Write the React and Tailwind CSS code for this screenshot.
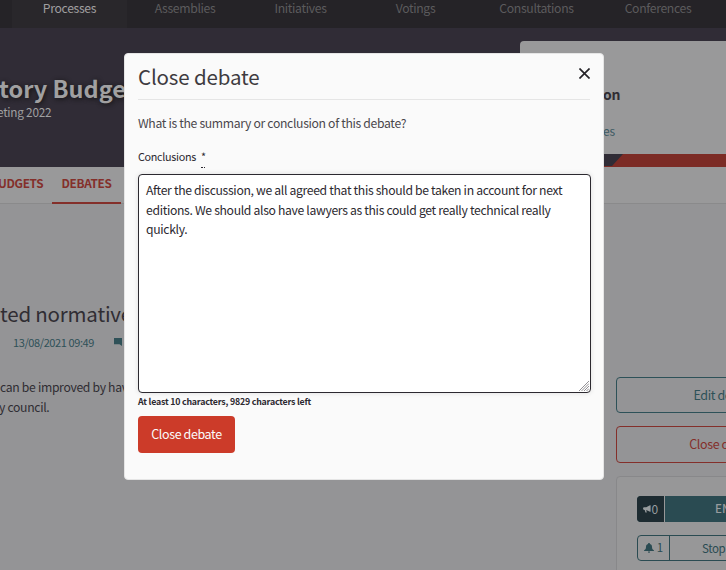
const NAV = [
  { label: "Processes", cell: "w-[115px] bg-[#29272b] text-[#a09fa0]" },
  { label: "Assemblies", cell: "w-[116px] text-[#5c5b5d]" },
  { label: "Initiatives", cell: "w-[115px] text-[#5c5b5d]" },
  { label: "Votings", cell: "w-[115px] text-[#5c5b5d]" },
  { label: "Consultations", cell: "w-[127px] text-[#5c5b5d]" },
  { label: "Conferences", cell: "w-[116px] text-[#5c5b5d]" },
];

function Nav() {
  return (
    <nav className="flex h-7 shrink-0 bg-[#252327] pl-3">
      {NAV.map((item) => (
        <div key={item.label} className={`flex h-7 shrink-0 justify-center text-[12.2px] leading-[16px] tracking-[-0.33px] ${item.cell}`}>
          {item.label}
        </div>
      ))}
    </nav>
  );
}

function Hero() {
  return (
    <header className="flex h-[139px] shrink-0 justify-between bg-[#302c36]">
      <div className="w-[300px] overflow-hidden pt-[44px] whitespace-nowrap text-[#a0a0a1]">
        <h1 className="-ml-px text-[23.5px] leading-[32px] font-bold [text-shadow:1px_1px_5px_#111]">tory Budgeting</h1>
        <p className="-ml-[3px] mt-px text-[11.8px] leading-[14px] tracking-[-0.25px]">eting 2022</p>
      </div>
      <div className="flex w-[206px] flex-col pt-[13px]">
        <div className="flex h-[113px] flex-col rounded-tl bg-[#99999a] pl-[83px]">
          <p className="mt-[42px] text-[14px] leading-[22px] font-bold tracking-[-0.2px] text-[#302d33]">on</p>
          <p className="mt-[16px] text-[12px] leading-[20px] tracking-[-0.25px] text-[#3c5a62]">es</p>
        </div>
        <div className="h-[13px] bg-[#7c2b25]">
          <div className="h-3 w-[103px] bg-[#302c36] [clip-path:polygon(0_0,100%_0,92px_100%,0_100%)]" />
        </div>
      </div>
    </header>
  );
}

function Tabs() {
  return (
    <div className="flex h-[37px] shrink-0 border-b border-[#8a8a8b] bg-[#99999a] text-[11.8px] leading-[32px] font-bold tracking-[-0.35px] text-[#842f2a]">
      <span className="-ml-[2px] w-[54px]">UDGETS</span>
      <span className="h-[38px] w-[69px] border-b-[3px] border-[#842f2a] text-center">DEBATES</span>
    </div>
  );
}

function Megaphone() {
  return (
    <svg viewBox="0 0 8 8" className="size-2" fill="currentColor">
      <path d="M7 0.3 3.2 2.3H1.2Q0 2.3 0 3.6T1.2 5H1.7L2.4 7.5H3.8L3.2 5 7 6.8ZM7.4 .3H8V6.8H7.4Z" />
    </svg>
  );
}

function Bell() {
  return (
    <svg viewBox="0 0 10 10" className="size-[10px]" fill="currentColor">
      <path d="M5 0C4.3 0 4 .5 4 1 2.5 1.4 2 2.6 2 4 2 6 1.2 6.6 0 7.5V8H10V7.5C8.8 6.6 8 6 8 4 8 2.6 7.5 1.4 6 1 6 .5 5.7 0 5 0ZM4 8.6H6Q6 10 5 10T4 8.6Z" />
    </svg>
  );
}

function Content() {
  return (
    <main className="flex min-h-0 flex-1 justify-between bg-[#949496]">
      <article className="w-[400px] overflow-hidden pt-[92px] whitespace-nowrap text-[#302d33]">
        <h2 className="text-[20.5px] leading-[34px] tracking-[-0.2px]">ted normative</h2>
        <div className="ml-[13px] flex h-5 items-center gap-[19px] text-[11px] leading-5 tracking-[-0.4px] text-[#2f5158]">
          <span className="mt-[3px] w-[81.5px]">13/08/2021 09:49</span>
          <svg viewBox="0 0 8 8" className="mt-[4px] size-2" fill="currentColor"><path d="M0 0H8V8L5.500 6.200H0Z" /></svg>
        </div>
        <p className="mt-[27px] text-[12.2px] leading-5 tracking-[-0.32px]">can be improved by having<br /><span className="-ml-px">y council.</span></p>
      </article>
      <aside className="w-[110px] shrink-0 overflow-hidden pt-[173px]">
        <div className="flex h-9 w-[217px] items-center justify-center rounded border border-[#2d5158] text-[12.5px] tracking-[-0.4px] text-[#2d5158]">Edit debate</div>
        <div className="mt-[13px] flex h-[37px] w-[217px] items-center justify-center rounded border border-[#842f2a] text-[12.5px] tracking-[-0.4px] text-[#842f2a]">Close debate</div>
        <div className="mt-[13px] h-[140px] w-[217px] rounded border border-[#88888a] bg-[#979798] px-5 pt-[19px]">
          <div className="flex h-[26px] overflow-hidden rounded bg-[#2a4b52] text-[#989c9e]">
            <div className="flex w-7 items-center justify-center border-r border-[#979798] bg-[#1d2b31] text-[12px] tracking-[-0.6px]"><Megaphone />0</div>
            <span className="ml-[50px] text-[11.5px] leading-[25px] font-medium">ENDORSE</span>
          </div>
          <div className="mt-[13px] flex h-[26px] rounded border border-[#2a4b52] text-[#2a4b52]">
            <div className="flex w-8 items-center justify-center gap-[3px] border-r border-[#2a4b52] text-[11.5px]"><Bell />1</div>
            <span className="ml-[32px] text-[11.5px] leading-6 tracking-[-0.4px] whitespace-nowrap">Stop following</span>
          </div>
        </div>
      </aside>
    </main>
  );
}

function Dialog() {
  return (
    <section className="absolute top-[53px] left-[124px] flex h-[427px] w-[480px] flex-col items-start rounded border border-[#e5e5e5] bg-[#fafafa] px-[13px] text-[#2c2930]">
      <div className="flex h-[46px] w-full shrink-0 justify-between border-b border-[#e5e5e5] text-[#3e3b40]">
        <h2 className="pt-[5px] text-[20.5px] leading-[34px] tracking-[-0.15px]">Close debate</h2>
        <svg viewBox="0 0 10 10" className="mt-[14px] size-[11px] text-[#252328]" stroke="currentColor" strokeWidth="1.5"><path d="M.4.4 9.600 9.600M9.600.4.4 9.600" /></svg>
      </div>
      <p className="mt-[13px] text-[12.2px] leading-5 tracking-[-0.33px] text-[#4a474c]">What is the summary or conclusion of this debate?</p>
      <label className="mt-[13px] flex h-[28px] gap-[5px] text-[10.8px] leading-5 tracking-[-0.3px]">
        Conclusions
        <span className="h-[22px] w-[4px] border-b border-dotted border-[#2c2930]">*</span>
      </label>
      <div className="relative h-[219px] w-[453px] shrink-0">
        <textarea
          className="block size-full resize-none rounded border border-[#2c2930] bg-white py-[6px] pr-[7px] pl-[7px] text-[12.2px] leading-[19.5px] tracking-[-0.33px] shadow-[0_0_5px_#ddd] outline-none"
          defaultValue="After the discussion, we all agreed that this should be taken in account for next editions. We should also have lawyers as this could get really technical really quickly."
        />
        <svg viewBox="0 0 10 10" className="absolute right-[2px] bottom-[2px] size-[10px]" stroke="#77757a" strokeWidth=".8"><path d="M0 10 10 0M2.500 10 10 2.500M5 10 10 5M7.500 10 10 7.500" /></svg>
      </div>
      <p className="mt-px text-[8.8px] leading-4 font-bold tracking-[-0.2px]">At least 10 characters, 9829 characters left</p>
      <button className="mt-[6px] h-[37px] w-[97px] rounded bg-[#cc3b29] text-[12.5px] tracking-[-0.4px] text-[#fafafa]">Close debate</button>
    </section>
  );
}

export default function App() {
  return (
    <div className="relative flex h-[570px] w-[726px] flex-col overflow-hidden font-['Noto_Sans_CJK_SC','Noto_Sans',sans-serif]">
      <Nav />
      <Hero />
      <Tabs />
      <Content />
      <Dialog />
    </div>
  );
}
